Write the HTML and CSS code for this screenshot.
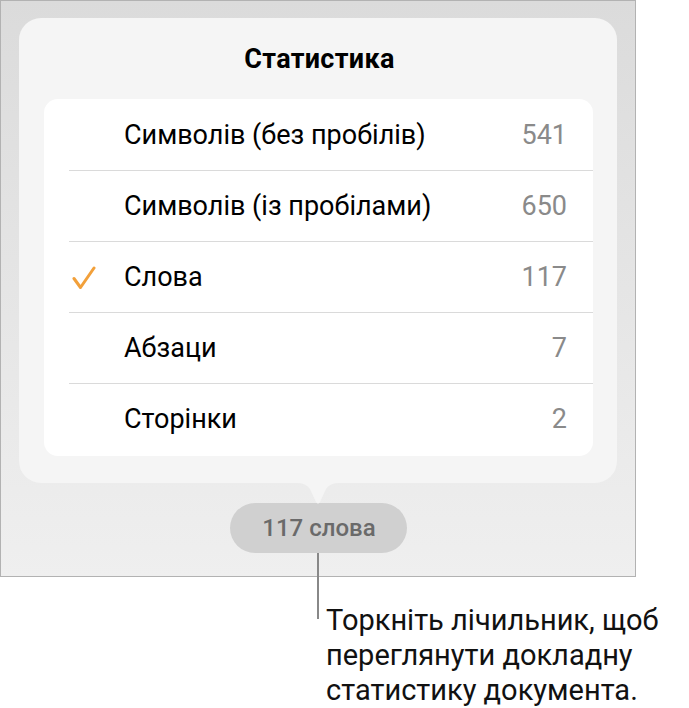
FILE: index.html
```html
<!DOCTYPE html>
<html lang="uk">
<head>
<meta charset="utf-8">
<title>Статистика</title>
<link rel="stylesheet" href="styles.css">
</head>
<body>
<div class="figure">
  <div class="frame">
    <div class="card">
      <div class="card-title">Статистика</div>
      <ul class="list">
        <li class="row"><span class="check"></span><span class="label">Символів (без пробілів)</span><span class="value">541</span></li>
        <li class="row"><span class="check"></span><span class="label">Символів (із пробілами)</span><span class="value">650</span></li>
        <li class="row"><span class="check"><svg width="25" height="24" viewBox="0 0 25 24"><path d="M3 12.5 L9.5 21.5 L23 2" fill="none" stroke="#f2a03a" stroke-width="3" stroke-linecap="round" stroke-linejoin="round"/></svg></span><span class="label">Слова</span><span class="value">117</span></li>
        <li class="row"><span class="check"></span><span class="label">Абзаци</span><span class="value">7</span></li>
        <li class="row"><span class="check"></span><span class="label">Сторінки</span><span class="value">2</span></li>
      </ul>
      <svg class="pointer" width="46" height="21" viewBox="0 0 46 21"><path d="M0 0 C8 0 11 1 15 6 L21 19 Q23 22 25 19 L31 6 C35 1 38 0 46 0 Z" fill="#f5f5f5"/></svg>
    </div>
    <div class="counter">117 слова</div>
  </div>
  <div class="leader"></div>
  <p class="callout">Торкніть лічильник, щоб<br>переглянути докладну<br>статистику документа.</p>
</div>
</body>
</html>
```
FILE: styles.css
```css
* { box-sizing: border-box; }
body {
  margin: 0;
  background: #ffffff;
  font-family: Roboto, "Noto Sans", sans-serif;
  color: #000;
}
.figure {
  position: relative;
  width: 689px;
  height: 708px;
}
.frame {
  width: 636px;
  height: 577px;
  border: 1px solid #b2b2b2;
  background: linear-gradient(#dbdbdb, #efefef);
  padding: 17px 17px 0 17px;
  display: flex;
  flex-direction: column;
  align-items: center;
}
.card {
  position: relative;
  width: 598px;
  height: 465px;
  background: #f5f5f5;
  border-radius: 22px;
  padding: 0 24px 0 25px;
}
.card-title {
  height: 81px;
  display: flex;
  align-items: center;
  justify-content: center;
  font-size: 27px;
  font-weight: 700;
  letter-spacing: 0.3px;
  padding-left: 2px;
}
.list {
  list-style: none;
  margin: 0;
  padding: 0;
  background: #fff;
  border-radius: 14px;
  height: 357px;
}
.row {
  height: 71px;
  display: flex;
  align-items: center;
  margin-left: 25px;
  padding-right: 26px;
  font-size: 27px;
}
.row + .row { border-top: 1px solid #dadada; }
.check {
  width: 57px;
  flex: none;
  display: flex;
  align-items: center;
  padding-left: 2px;
}
.check svg { display: block; margin-top: 1px; }
.label { flex: 1; margin-left: -2px; }
.value { color: #8a8a8a; }
.pointer {
  position: absolute;
  left: 276px;
  top: 465px;
}
.counter {
  margin-top: 20px;
  width: 177px;
  height: 50px;
  border-radius: 25px;
  background: #d0d0d0;
  color: #6a6a6a;
  font-size: 24px;
  font-weight: 500;
  display: flex;
  align-items: center;
  justify-content: center;
  padding-left: 2px;
}
.leader {
  position: absolute;
  left: 317px;
  top: 553px;
  width: 2px;
  height: 66px;
  background: #888;
}
.callout {
  margin: 26px 0 0 326px;
  font-size: 29px;
  line-height: 35px;
  color: #111;
}
```
